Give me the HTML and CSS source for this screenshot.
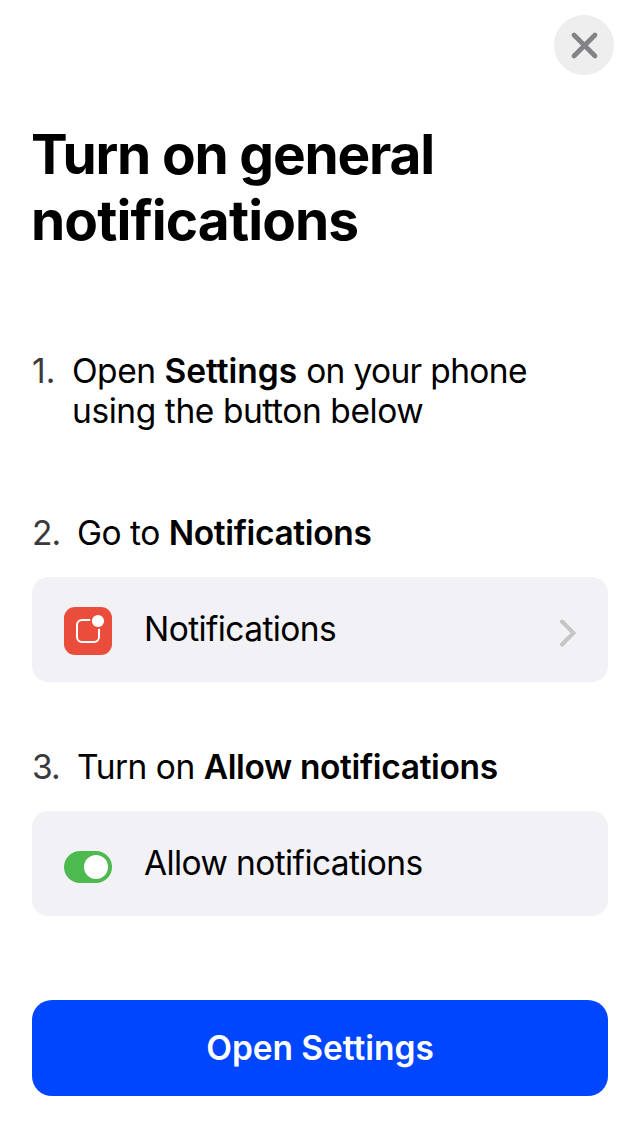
FILE: index.html
```html
<!DOCTYPE html>
<html lang="en">
<head>
<meta charset="utf-8">
<title>Turn on general notifications</title>
<link rel="stylesheet" href="styles.css">
</head>
<body>
<main class="sheet">
  <header class="topbar">
    <button class="close" aria-label="Close">
      <svg width="60" height="60" viewBox="0 0 60 60"><path d="M20 20L41 41M41 20L20 41" stroke="#838387" stroke-width="4.7" stroke-linecap="round"/></svg>
    </button>
  </header>
  <h1 class="title">Turn on general<br><span class="title-second">notifications</span></h1>
  <ol class="steps">
    <li class="step step-one">
      <span class="num">1.</span>
      <p class="text">Open <b class="settings">Settings</b> <span class="phone">on your phone</span><br><span class="below">using the button below</span></p>
    </li>
    <li class="step step-two">
      <span class="num">2.</span>
      <p class="text">Go to <b>Notifications</b></p>
    </li>
    <li class="card">
      <svg class="icon" width="48" height="48" viewBox="0 0 48 48"><rect width="48" height="48" rx="11" fill="#eb4d3d"/><rect x="13" y="13" width="22" height="22" rx="5" fill="none" stroke="#fff" stroke-width="2"/><circle cx="34" cy="14" r="8" fill="#eb4d3d"/><circle cx="34" cy="14" r="6.1" fill="#fff"/></svg>
      <span class="label">Notifications</span>
      <svg class="chevron" width="18" height="28" viewBox="0 0 18 28"><path d="M4 2.5L15.5 14L4 25.5" fill="none" stroke="#c5c5c7" stroke-width="4" stroke-linecap="round"/></svg>
    </li>
    <li class="step step-three">
      <span class="num">3.</span>
      <p class="text">Turn on <b>Allow notifications</b></p>
    </li>
    <li class="card">
      <svg class="icon toggle" width="48" height="32" viewBox="0 0 48 32"><rect width="48" height="32" rx="16" fill="#4dba4f"/><circle cx="32" cy="16" r="12" fill="#fff"/></svg>
      <span class="label">Allow notifications</span>
    </li>
  </ol>
  <button class="primary">Open Settings</button>
</main>
</body>
</html>
```
FILE: styles.css
```css
* { box-sizing: border-box; }
body { margin: 0; background: #fff; color: #000; font-family: Inter, "Liberation Sans", sans-serif; font-feature-settings: "calt" 0, "liga" 0; }
.sheet { width: 640px; height: 1136px; padding: 15px 32px 40px; display: flex; flex-direction: column; }
.topbar { display: flex; justify-content: flex-end; margin-right: -6px; }
.close { width: 60px; height: 60px; border: 0; padding: 0; border-radius: 50%; background: #eee; }
.close svg { display: block; }
.title { margin: 46px 0 0 -1px; font-size: 55px; line-height: 66px; font-weight: 700; letter-spacing: -1.2px; white-space: nowrap; }
.title-second { letter-spacing: -0.9px; }
.steps { list-style: none; margin: 98px 0 0; padding: 0; }
.step { display: flex; font-size: 33.5px; line-height: 40px; letter-spacing: -0.5px; white-space: nowrap; }
.num { width: 40px; color: #3a3a3c; }
.step-one .num { padding-left: 0; letter-spacing: 0; }
.text { margin: 0; }
.text b { font-weight: 600; letter-spacing: -0.35px; }
.text .settings { letter-spacing: 0; }
.phone { letter-spacing: -0.65px; }
.below { letter-spacing: -0.42px; }
.step-two { margin-top: 82px; }
.step-three { margin-top: 65px; }
.step-two .num, .step-three .num { width: 45px; letter-spacing: -1px; }
.card { display: flex; align-items: center; height: 105px; margin-top: 24px; padding: 0 32px; border-radius: 16px; background: #f2f1f6; font-size: 33.5px; line-height: 40px; letter-spacing: -0.6px; }
.icon { flex: none; margin: 3px 32px 0 0; }
.toggle { margin-top: 6px; }
.label { flex: 1; padding-bottom: 2px; }
.chevron { margin-top: 7px; }
.primary { margin-top: auto; height: 96px; border: 0; border-radius: 20px; background: #0046ff; color: #fff; font: 600 33.5px/40px Inter, "Liberation Sans", sans-serif; letter-spacing: -0.05px; font-feature-settings: "calt" 0, "liga" 0; }
```
